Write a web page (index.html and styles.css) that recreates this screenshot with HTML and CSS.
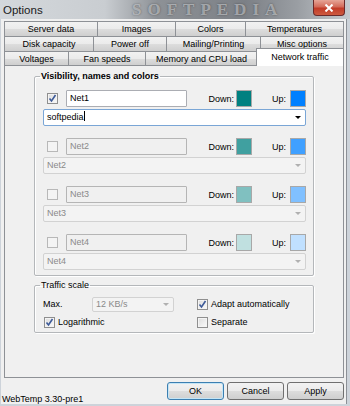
FILE: index.html
```html
<!DOCTYPE html>
<html>
<head>
<meta charset="utf-8">
<link rel="stylesheet" href="styles.css">
</head>
<body>
<div class="window">
  <div class="titlebar">
    <span class="title">Options</span>
    <span class="watermark">SOFTPEDIA</span>
    <span class="close"><svg width="10" height="8" viewBox="0 0 10 8"><path d="M1.5 0.5 L8.5 7.5 M8.5 0.5 L1.5 7.5" stroke="#fff" stroke-width="2"/></svg></span>
  </div>
  <div class="client">
    <div class="tabs">
      <div class="tabrow">
        <div class="tab t93">Server data</div>
        <div class="tab t78">Images</div>
        <div class="tab t70">Colors</div>
        <div class="tab tfill">Temperatures</div>
      </div>
      <div class="tabrow">
        <div class="tab t89">Disk capacity</div>
        <div class="tab t73">Power off</div>
        <div class="tab t94">Mailing/Printing</div>
        <div class="tab tfill">Misc options</div>
      </div>
      <div class="tabrow last">
        <div class="tab t64">Voltages</div>
        <div class="tab t77">Fan speeds</div>
        <div class="tab t112">Memory and CPU load</div>
        <div class="tab tfill active">Network traffic</div>
      </div>
    </div>
    <div class="panel">
      <fieldset class="group nets">
        <legend class="legend bold">Visibility, names and colors</legend>
        <div class="net">
          <div class="netline">
            <span class="cb checked"><svg width="9" height="9" viewBox="0 0 9 9"><path d="M1.5 4.5 L3.5 7 L7.5 1" fill="none" stroke="#3d5a98" stroke-width="1.6"/></svg></span>
            <span class="edit">Net1</span>
            <span class="spacer"></span>
            <span class="lbl">Down:</span><span class="sw d1"></span>
            <span class="lbl up">Up:</span><span class="sw u1"></span>
          </div>
          <div class="combo focus"><span class="ctext">softpedia<span class="caret"></span></span><span class="arrow"></span></div>
        </div>
        <div class="net">
          <div class="netline">
            <span class="cb dis"></span>
            <span class="edit dis">Net2</span>
            <span class="spacer"></span>
            <span class="lbl">Down:</span><span class="sw d2"></span>
            <span class="lbl up">Up:</span><span class="sw u2"></span>
          </div>
          <div class="combo dis"><span class="ctext">Net2</span><span class="arrow"></span></div>
        </div>
        <div class="net">
          <div class="netline">
            <span class="cb dis"></span>
            <span class="edit dis">Net3</span>
            <span class="spacer"></span>
            <span class="lbl">Down:</span><span class="sw d3"></span>
            <span class="lbl up">Up:</span><span class="sw u3"></span>
          </div>
          <div class="combo dis"><span class="ctext">Net3</span><span class="arrow"></span></div>
        </div>
        <div class="net">
          <div class="netline">
            <span class="cb dis"></span>
            <span class="edit dis">Net4</span>
            <span class="spacer"></span>
            <span class="lbl">Down:</span><span class="sw d4"></span>
            <span class="lbl up">Up:</span><span class="sw u4"></span>
          </div>
          <div class="combo dis"><span class="ctext">Net4</span><span class="arrow"></span></div>
        </div>
      </fieldset>
      <fieldset class="group scale">
        <legend class="legend">Traffic scale</legend>
        <div class="scalegrid">
          <div class="maxrow">
            <span class="maxlbl">Max.</span>
            <div class="combo dis small"><span class="ctext">12 KB/s</span><span class="arrow"></span></div>
          </div>
          <label class="chk"><span class="cb checked"><svg width="9" height="9" viewBox="0 0 9 9"><path d="M1.5 4.5 L3.5 7 L7.5 1" fill="none" stroke="#3d5a98" stroke-width="1.6"/></svg></span>Adapt automatically</label>
          <label class="chk"><span class="cb checked"><svg width="9" height="9" viewBox="0 0 9 9"><path d="M1.5 4.5 L3.5 7 L7.5 1" fill="none" stroke="#3d5a98" stroke-width="1.6"/></svg></span>Logarithmic</label>
          <label class="chk"><span class="cb"></span>Separate</label>
        </div>
      </fieldset>
    </div>
    <div class="bottombar">
      <span class="status">WebTemp 3.30-pre1</span>
      <div class="buttons">
        <span class="btn default">OK</span>
        <span class="btn">Cancel</span>
        <span class="btn">Apply</span>
      </div>
    </div>
  </div>
</div>
</body>
</html>
```

FILE: styles.css
```css
* { box-sizing: border-box; }
html, body { margin: 0; padding: 0; }
body {
  width: 350px;
  height: 406px;
  overflow: hidden;
  background: #cdd3da;
  font-family: "Liberation Sans", Arial, sans-serif;
  font-size: 9px;
  color: #000;
}
.window { display: flex; flex-direction: column; height: 406px; }

.titlebar {
  height: 19px;
  flex: none;
  display: flex;
  align-items: center;
  position: relative;
  background: linear-gradient(90deg, #d4d8dc 0%, #c9cdd1 30%, #8d9196 45%, #7c8086 70%, #9a9ea3 85%, #c6cace 100%);
}
.title {
  font-size: 11.5px;
  color: #1a1a1a;
  padding-left: 3px;
  padding-top: 1px;
}
.watermark {
  position: absolute;
  left: 132px;
  top: 0;
  height: 19px;
  line-height: 19px;
  font-family: "Liberation Serif", serif;
  font-weight: bold;
  font-size: 17px;
  letter-spacing: 6px;
  color: rgba(225, 228, 232, 0.55);
  text-shadow: 0 0 2px rgba(40, 40, 40, 0.6);
}
.close {
  margin-left: auto;
  margin-right: 5px;
  align-self: flex-start;
  width: 32px;
  height: 16px;
  border: 1px solid #6b2a2a;
  border-top: none;
  border-radius: 0 0 4px 4px;
  background: linear-gradient(#e6a597 0%, #d36b5a 45%, #c23b28 55%, #cd5a3f 100%);
  display: flex;
  align-items: center;
  justify-content: center;
  position: relative;
}

.client {
  flex: 1;
  margin: 0 3px 2px 1px;
  background: #f0f0f0;
  border-right: 1px solid #8c9096;
  padding-top: 2px;
  display: flex;
  flex-direction: column;
}

.tabs { margin: 0 2px 0 3px; }
.tabrow { display: flex; height: 15px; }
.tabrow.last { height: 14px; }
.tab {
  flex: none;
  height: 100%;
  border: 1px solid #8e9196;
  border-bottom: none;
  margin-right: -1px;
  background: linear-gradient(#f2f2f2 0%, #ebebeb 50%, #dddddd 51%, #cfcfcf 100%);
  display: flex;
  align-items: center;
  justify-content: center;
  line-height: 10px;
  white-space: nowrap;
}
.tabrow .tab:last-child { margin-right: 0; }
.tfill { flex: 1; }
.t93 { width: 94px; }
.t78 { width: 79px; }
.t70 { width: 71px; }
.t89 { width: 90px; }
.t73 { width: 74px; }
.t94 { width: 95px; }
.t64 { width: 65px; }
.t77 { width: 78px; }
.t112 { width: 113px; }
.tab.active {
  background: #fff;
  height: 18px;
  margin-top: -3px;
  margin-left: -1px;
  margin-right: -1px;
  position: relative;
  z-index: 2;
  align-items: flex-start;
  padding-top: 3px;
}

.panel {
  margin: 0 2px 0 3px;
  height: 313px;
  border: 1px solid #8e9196;
  background: #f0f0f0;
  padding: 5px 29px 0 29px;
  position: relative;
  z-index: 1;
}

.group {
  margin: 0;
  min-width: 0;
  border: 1px solid #b4b7ba;
  box-shadow: 1px 1px 0 #fff, inset 1px 1px 0 #fff;
  border-radius: 2px;
  padding: 9px 7px 5px 8px;
}
.legend {
  padding: 0 1px;
  margin-left: -3px;
  line-height: 10px;
  height: 10px;
}
.bold { font-weight: bold; }

.net { display: flex; flex-direction: column; gap: 2px; }
.net + .net { margin-top: 12px; }
.netline { display: flex; align-items: center; height: 17px; }
.spacer { flex: 1; }
.cb {
  flex: none;
  width: 11px;
  height: 11px;
  border: 1px solid #8f8f8f;
  background: linear-gradient(135deg, #dcdcdc 0%, #fbfbfb 100%);
  box-shadow: inset 0 0 0 1px #f4f4f4;
  display: inline-flex;
  align-items: center;
  justify-content: center;
}
.netline .cb { margin-left: 4px; margin-right: 8px; }
.cb.dis { border-color: #b8b8b8; background: #f4f4f4; }
.edit {
  width: 121px;
  height: 17px;
  border: 1px solid #abadb3;
  border-radius: 1px;
  background: #fff;
  padding-left: 3px;
  line-height: 15px;
}
.edit.dis { background: #f0f0f0; border-color: #b5b5b5; color: #8a8a8a; }
.lbl { margin-right: 2px; }
.lbl.up { margin-left: 20px; margin-right: 4px; }
.sw {
  width: 16px;
  height: 17px;
  border: 1px solid #a8a8a8;
}
.d1 { background: #008080; }
.u1 { background: #0080ff; }
.d2 { background: #40a0a0; }
.u2 { background: #40a0ff; }
.d3 { background: #80c0c0; }
.u3 { background: #80c0ff; }
.d4 { background: #c0e0e0; }
.u4 { background: #c0e0ff; }

.combo {
  height: 17px;
  border: 1px solid #abadb3;
  border-radius: 2px;
  background: #fff;
  display: flex;
  align-items: center;
  padding-left: 3px;
}
.combo.focus { border-color: #7aa6d6; }
.combo.dis { background: #f3f3f3; border-color: #d2d2d2; color: #8a8a8a; }
.ctext { flex: 1; line-height: 15px; }
.caret { display: inline-block; width: 1px; height: 10px; background: #000; vertical-align: -1px; }
.arrow {
  width: 0;
  height: 0;
  border-left: 3px solid transparent;
  border-right: 3px solid transparent;
  border-top: 3px solid #000;
  margin-right: 4px;
}
.combo.dis .arrow { border-top-color: #b0b0b0; }

.scale { margin-top: 4px; padding: 6px 7px 3px 8px; }
.scalegrid {
  display: grid;
  grid-template-columns: 153px auto;
  row-gap: 3px;
  align-items: center;
}
.maxrow { display: flex; align-items: center; height: 16px; }
.maxlbl { width: 49px; }
.combo.small { width: 82px; height: 15px; }
.chk { display: flex; align-items: center; gap: 3px; height: 14px; }
.scalegrid .chk .cb { margin-left: 1px; }

.bottombar {
  flex: 1;
  display: flex;
  align-items: flex-start;
  padding-top: 4px;
  position: relative;
}
.status { align-self: flex-end; padding-left: 1px; line-height: 10px; padding-bottom: 0; }
.buttons { margin-left: auto; margin-right: 2px; display: flex; gap: 3px; }
.btn {
  width: 57px;
  height: 18px;
  border: 1px solid #707070;
  border-radius: 3px;
  background: linear-gradient(#f2f2f2 0%, #ebebeb 50%, #dddddd 51%, #cfcfcf 100%);
  display: flex;
  align-items: center;
  justify-content: center;
}
.btn.default { border-color: #3c7fb1; box-shadow: inset 0 0 0 1px #c4e5f6; }
```
